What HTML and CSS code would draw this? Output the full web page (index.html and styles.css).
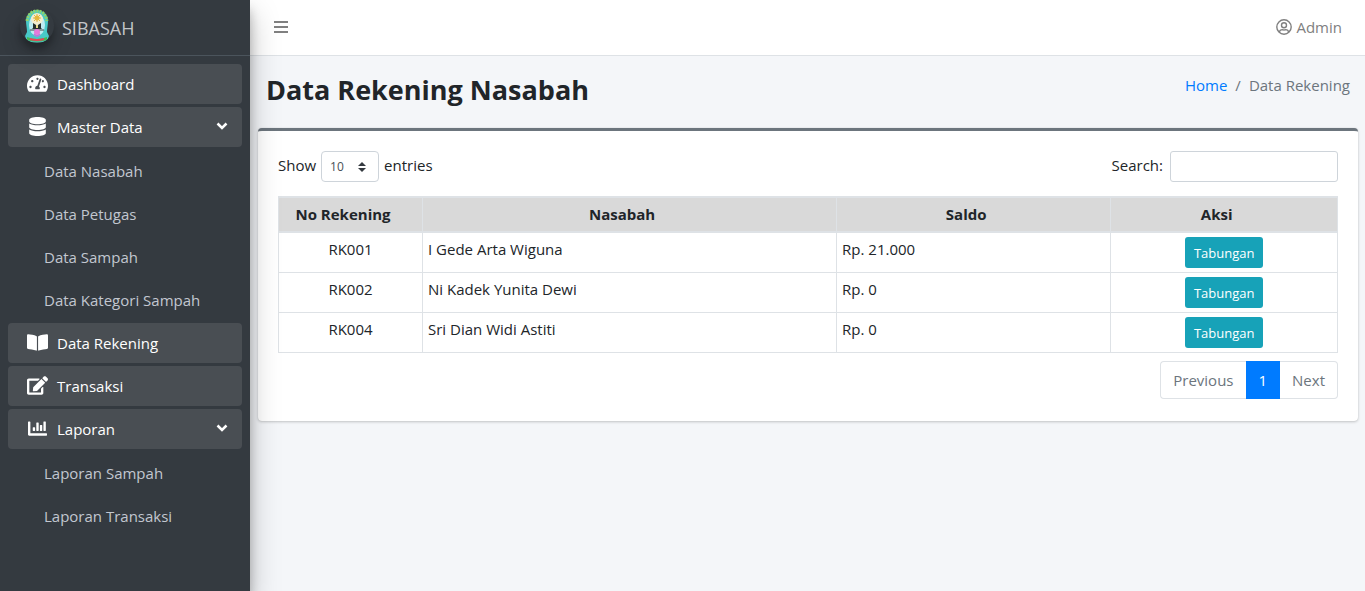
FILE: index.html
```html
<!DOCTYPE html>
<html lang="id">
<head>
<meta charset="utf-8">
<meta name="viewport" content="width=device-width, initial-scale=1">
<title>SIBASAH - Data Rekening</title>
<link rel="stylesheet" href="styles.css">
</head>
<body>
<div class="layout">
  <aside class="sidebar">
    <a class="brand" href="#">
      <svg class="brand-logo" viewBox="0 0 34 34" aria-hidden="true">
        <path d="M17 1c6 0 11 5 11 11 0 4-1 7-1 11l2 4-2 5q-10 3-20 0l-2-5 2-4c0-4-1-7-1-11C6 6 11 1 17 1z" fill="#48c9c8"/>
        <path d="M7 12C8 5 12 2 17 2s9 3 10 10" fill="none" stroke="#8fd36b" stroke-width="3" stroke-dasharray="2 1"/>
        <ellipse cx="17" cy="16" rx="8" ry="11" fill="#bdebf2"/>
        <ellipse cx="17" cy="10" rx="6" ry="6" fill="#f3edcf"/>
        <circle cx="17" cy="9" r="2.500" fill="#efbd32"/>
        <path d="M17 5v8M13 9h8M14 6l6 6M20 6l-6 6" stroke="#e0b545" stroke-width="1"/>
        <path d="M13 14l3 2h2l3-2v5l1 1H12l1-1z" fill="#26302e"/>
        <path d="M16 16h2v3h-2z" fill="#e8d98a"/>
        <path d="M10 21h14" stroke="#444" stroke-width="1"/>
        <circle cx="17" cy="23" r="3" fill="#e679d9"/>
        <path d="M14 25q3 4 6 0" fill="none" stroke="#b77bdc" stroke-width="2"/>
        <path d="M7 28q10 4 20 0v3q-10 3-20 0z" fill="#46b653"/>
        <path d="M10 30q7 2 14 0" fill="none" stroke="#e3465a" stroke-width="2"/>
      </svg>
      <span>SIBASAH</span>
    </a>
    <nav class="menu">
      <a class="menu-item" href="#">
        <svg class="menu-icon" viewBox="0 0 576 512" aria-hidden="true"><path d="M288 32C128.94 32 0 160.94 0 320c0 52.8 14.25 102.26 39.06 144.8 5.61 9.62 16.3 15.2 27.44 15.2h443c11.14 0 21.83-5.58 27.44-15.2C561.75 422.26 576 372.8 576 320c0-159.06-128.94-288-288-288zm0 64c14.71 0 26.58 10.13 30.32 23.65-1.11 2.26-2.64 4.23-3.45 6.67l-9.22 27.67c-5.13 3.49-10.97 6.01-17.64 6.01-17.67 0-32-14.33-32-32S270.33 96 288 96zM96 384c-17.67 0-32-14.33-32-32s14.33-32 32-32 32 14.33 32 32-14.33 32-32 32zm48-160c-17.67 0-32-14.33-32-32s14.33-32 32-32 32 14.33 32 32-14.33 32-32 32zm246.77-72.41l-61.33 184C343.13 347.33 352 364.54 352 384c0 11.72-3.38 22.55-8.88 32H232.88c-5.5-9.45-8.88-20.28-8.88-32 0-33.94 26.5-61.43 59.9-63.59l61.34-184.01c4.17-12.56 17.73-19.45 30.36-15.17 12.57 4.19 19.35 17.79 15.17 30.36zm14.66 57.2l15.52-46.55c3.47-1.29 7.13-2.23 11.05-2.23 17.67 0 32 14.33 32 32s-14.33 32-32 32c-11.38-.01-20.89-6.28-26.57-15.22zM480 384c-17.67 0-32-14.33-32-32s14.33-32 32-32 32 14.33 32 32-14.33 32-32 32z"/></svg>
        <span>Dashboard</span>
      </a>
      <a class="menu-item" href="#">
        <svg class="menu-icon" viewBox="0 0 448 512" aria-hidden="true"><path d="M448 73.143v45.714C448 159.143 347.667 192 224 192S0 159.143 0 118.857V73.143C0 32.857 100.333 0 224 0s224 32.857 224 73.143zM448 176v102.857C448 319.143 347.667 352 224 352S0 319.143 0 278.857V176c48.125 33.143 136.208 48.572 224 48.572S399.874 209.143 448 176zm0 160v102.857C448 479.143 347.667 512 224 512S0 479.143 0 438.857V336c48.125 33.143 136.208 48.572 224 48.572S399.874 369.143 448 336z"/></svg>
        <span>Master Data</span>
        <svg class="menu-arrow" viewBox="0 0 12 8" aria-hidden="true"><path d="M1.500 1.500L6 6l4.500-4.500"/></svg>
      </a>
      <div class="submenu">
        <a class="submenu-item" href="#">Data Nasabah</a>
        <a class="submenu-item" href="#">Data Petugas</a>
        <a class="submenu-item" href="#">Data Sampah</a>
        <a class="submenu-item" href="#">Data Kategori Sampah</a>
      </div>
      <a class="menu-item" href="#">
        <svg class="menu-icon" viewBox="0 0 576 512" aria-hidden="true"><path d="M542.22 32.05c-54.8 3.11-163.72 14.43-230.96 55.59-4.64 2.84-7.27 7.89-7.27 13.17v363.87c0 11.55 12.63 18.85 23.28 13.49 69.18-34.82 169.23-44.32 218.7-46.92 16.89-.89 30.02-14.43 30.02-30.66V62.75c.01-17.71-15.35-31.74-33.77-30.7zM264.73 87.64C197.5 46.48 88.58 35.17 33.78 32.05 15.36 31.01 0 45.04 0 62.75V400.6c0 16.24 13.13 29.78 30.02 30.66 49.49 2.6 149.59 12.11 218.77 46.95 10.62 5.35 23.21-1.94 23.21-13.46V100.63c0-5.29-2.62-10.14-7.27-12.99z"/></svg>
        <span>Data Rekening</span>
      </a>
      <a class="menu-item" href="#">
        <svg class="menu-icon" viewBox="0 0 576 512" aria-hidden="true"><path d="M402.6 83.2l90.2 90.2c3.8 3.8 3.8 10 0 13.8L274.4 405.6l-92.8 10.3c-12.4 1.4-22.9-9.1-21.5-21.5l10.3-92.8L388.8 83.2c3.8-3.8 10-3.8 13.8 0zm162-22.9l-48.8-48.8c-15.2-15.2-39.9-15.2-55.2 0l-35.4 35.4c-3.8 3.8-3.8 10 0 13.8l90.2 90.2c3.8 3.8 10 3.8 13.8 0l35.4-35.4c15.2-15.3 15.2-40 0-55.2zM384 346.2V448H64V128h229.8c3.2 0 6.2-1.3 8.5-3.5l40-40c7.6-7.6 2.2-20.5-8.5-20.5H48C21.5 64 0 85.5 0 112v352c0 26.5 21.5 48 48 48h352c26.5 0 48-21.5 48-48V306.2c0-10.7-12.9-16-20.5-8.5l-40 40c-2.2 2.3-3.5 5.3-3.5 8.5z"/></svg>
        <span>Transaksi</span>
      </a>
      <a class="menu-item" href="#">
        <svg class="menu-icon" viewBox="0 0 512 512" aria-hidden="true"><path d="M332.800 320h38.400c6.400 0 12.800-6.400 12.800-12.800V172.800c0-6.400-6.400-12.800-12.800-12.800h-38.400c-6.400 0-12.800 6.400-12.800 12.800v134.400c0 6.400 6.400 12.800 12.800 12.800zm96 0h38.400c6.400 0 12.800-6.400 12.800-12.800V76.800c0-6.400-6.400-12.800-12.800-12.800h-38.400c-6.400 0-12.800 6.400-12.800 12.800v230.400c0 6.400 6.400 12.800 12.800 12.800zm-288 0h38.400c6.400 0 12.800-6.400 12.800-12.800v-70.400c0-6.400-6.400-12.800-12.800-12.800h-38.400c-6.400 0-12.800 6.400-12.800 12.800v70.400c0 6.400 6.400 12.800 12.800 12.800zm96 0h38.400c6.400 0 12.800-6.400 12.800-12.800V108.800c0-6.400-6.400-12.800-12.800-12.800h-38.400c-6.400 0-12.800 6.400-12.800 12.800v198.400c0 6.400 6.400 12.800 12.800 12.800zM496 384H64V80c0-8.840-7.160-16-16-16H16C7.160 64 0 71.160 0 80v336c0 17.670 14.330 32 32 32h464c8.840 0 16-7.160 16-16v-32c0-8.840-7.160-16-16-16z"/></svg>
        <span>Laporan</span>
        <svg class="menu-arrow" viewBox="0 0 12 8" aria-hidden="true"><path d="M1.500 1.500L6 6l4.500-4.500"/></svg>
      </a>
      <div class="submenu">
        <a class="submenu-item" href="#">Laporan Sampah</a>
        <a class="submenu-item" href="#">Laporan Transaksi</a>
      </div>
    </nav>
  </aside>

  <div class="main">
    <header class="topbar">
      <button class="menu-toggle" type="button" aria-label="Menu">
        <svg viewBox="0 0 14 12" width="14" height="12" aria-hidden="true"><path d="M0 0h14v2H0zM0 5h14v2H0zM0 10h14v2H0z"/></svg>
      </button>
      <a class="user-link" href="#">
        <svg viewBox="0 0 16 16" width="16" height="16" aria-hidden="true"><circle cx="8" cy="8" r="7.2"/><circle cx="8" cy="6.300" r="2.500"/><path d="M3.300 13.200c.4-1.800 1.500-2.600 3-2.600 1 .4 2.400.4 3.400 0 1.500 0 2.600.8 3 2.600"/></svg>
        <span>Admin</span>
      </a>
    </header>

    <div class="page-header">
      <h1 class="page-title">Data Rekening Nasabah</h1>
      <nav class="breadcrumb" aria-label="Breadcrumb">
        <a href="#">Home</a><span>/</span><span>Data Rekening</span>
      </nav>
    </div>

    <main class="card">
      <div class="table-tools">
        <label class="length">Show
          <select class="length-select"><option>10</option><option>25</option><option>50</option><option>100</option></select>
          entries</label>
        <label class="search">Search:
          <input class="search-input" type="search"></label>
      </div>

      <table class="accounts">
        <colgroup><col class="col-number"><col class="col-customer"><col class="col-balance"><col class="col-action"></colgroup>
        <thead>
          <tr><th>No Rekening</th><th>Nasabah</th><th>Saldo</th><th>Aksi</th></tr>
        </thead>
        <tbody>
          <tr><td class="center">RK001</td><td>I Gede Arta Wiguna</td><td>Rp. 21.000</td><td class="center"><button class="btn" type="button">Tabungan</button></td></tr>
          <tr><td class="center">RK002</td><td>Ni Kadek Yunita Dewi</td><td>Rp. 0</td><td class="center"><button class="btn" type="button">Tabungan</button></td></tr>
          <tr><td class="center">RK004</td><td>Sri Dian Widi Astiti</td><td>Rp. 0</td><td class="center"><button class="btn" type="button">Tabungan</button></td></tr>
        </tbody>
      </table>

      <nav class="pagination" aria-label="Pagination">
        <a class="page" href="#">Previous</a>
        <a class="page page-active" href="#">1</a>
        <a class="page" href="#">Next</a>
      </nav>
    </main>
  </div>
</div>
</body>
</html>
```
FILE: styles.css
```css
* { box-sizing: border-box; }

body {
  margin: 0;
  background: #f4f6f9;
  color: #212529;
  font-family: "Segoe UI", "Open Sans", "Noto Sans", sans-serif;
  font-size: 15px;
  line-height: 24px;
}

a { color: #007bff; text-decoration: none; }

.layout { display: flex; min-height: 100vh; }

.sidebar {
  flex: 0 0 250px;
  z-index: 1;
  background: #343a40;
  box-shadow: 0 14px 28px rgba(0, 0, 0, .25), 0 10px 10px rgba(0, 0, 0, .22);
}

.brand {
  display: flex;
  align-items: center;
  gap: 8px;
  height: 56px;
  padding: 0 20px;
  border-bottom: 1px solid #4b545c;
  color: #c2c5c8;
  font-size: 18px;
}

.brand-logo {
  width: 34px;
  height: 34px;
  margin-bottom: 4px;
  border-radius: 50%;
  box-shadow: 0 10px 20px rgba(0, 0, 0, .19), 0 6px 6px rgba(0, 0, 0, .23);
}

.menu { padding: 8px; }

.menu-item {
  display: flex;
  align-items: center;
  height: 40px;
  margin-bottom: 3px;
  padding: 0 14px 0 19px;
  border-radius: 4px;
  background: #494e53;
  color: #fff;
}

.menu-icon {
  width: 21px;
  height: 19px;
  margin: 0 9px 2px 0;
  fill: currentColor;
}

.menu-arrow {
  width: 12px;
  height: 8px;
  margin: 0 0 2px auto;
  fill: none;
  stroke: currentColor;
  stroke-width: 2.5;
}

.submenu { padding-top: 1px; }

.submenu-item {
  display: block;
  margin-bottom: 3px;
  padding: 8px 36px;
  color: #c2c7d0;
}

.main { flex: 1; min-width: 0; }

.topbar {
  display: flex;
  align-items: center;
  justify-content: space-between;
  height: 56px;
  padding: 0 23px 2px 24px;
  border-bottom: 1px solid #dee2e6;
  background: #fff;
}

.menu-toggle {
  display: flex;
  padding: 0;
  border: 0;
  background: none;
  fill: #808080;
}

.user-link {
  display: flex;
  align-items: center;
  gap: 4px;
  color: #808080;
}

.user-link svg { fill: none; stroke: currentColor; stroke-width: 1.4; }

.page-header {
  display: flex;
  justify-content: space-between;
  padding: 16px 15px 20px 16px;
}

.page-title {
  margin: 0;
  font-size: 27px;
  font-weight: 700;
  line-height: 36px;
}

.breadcrumb { display: flex; gap: 8px; padding-top: 1px; color: #6c757d; }

.card {
  margin: 0 7px 0 8px;
  padding: 20px 20px 22px;
  border-top: 3px solid #6c757d;
  border-radius: 4px;
  background: #fff;
  box-shadow: 0 0 1px rgba(0, 0, 0, .13), 0 1px 3px rgba(0, 0, 0, .2);
}

.table-tools {
  display: flex;
  justify-content: space-between;
  margin-bottom: 14px;
}

.length, .search {
  display: flex;
  align-items: flex-start;
  gap: 5px;
  line-height: 29px;
}

.search { gap: 7px; }

.length-select {
  appearance: none;
  width: 58px;
  height: 31px;
  padding: 0 8px;
  border: 1px solid #ced4da;
  border-radius: 4px;
  background: #fff url("data:image/svg+xml,%3csvg xmlns='http://www.w3.org/2000/svg' viewBox='0 0 4 5'%3e%3cpath fill='%23343a40' d='M2 0L0 2h4zm0 5L0 3h4z'/%3e%3c/svg%3e") no-repeat right 12px center / 8px 10px;
  color: #495057;
  font: inherit;
  font-size: 12px;
}

.search-input {
  width: 168px;
  height: 31px;
  padding: 4px 8px;
  border: 1px solid #ced4da;
  border-radius: 3px;
  background: #fff;
  font: inherit;
}

.accounts {
  width: 100%;
  border-collapse: collapse;
  table-layout: fixed;
}

.col-number { width: 13.6%; }
.col-customer { width: 39.1%; }
.col-balance { width: 25.9%; }
.col-action { width: 21.4%; }

.accounts th, .accounts td {
  padding: 4px 5px;
  border: 1px solid #dee2e6;
  vertical-align: top;
}

.accounts th {
  padding: 4px 20px 5px 5px;
  border-top-width: 2px;
  border-bottom-width: 2px;
  background: #d9d9d9;
}

.accounts .center { text-align: center; }

.btn {
  display: block;
  height: 31px;
  margin: 0 auto;
  padding: 0 9px;
  border: 0;
  border-radius: 3px;
  background: #17a2b8;
  color: #fff;
  font: inherit;
  font-size: 13px;
}

.pagination { display: flex; justify-content: flex-end; margin-top: 8px; }

.page {
  padding: 6px 12px;
  border: 1px solid #dee2e6;
  color: #6c757d;
}

.page:first-child { border-right: 0; border-radius: 4px 0 0 4px; }
.page:last-child { border-left: 0; border-radius: 0 4px 4px 0; }

.page-active { border-color: #007bff; background: #007bff; color: #fff; }
```
